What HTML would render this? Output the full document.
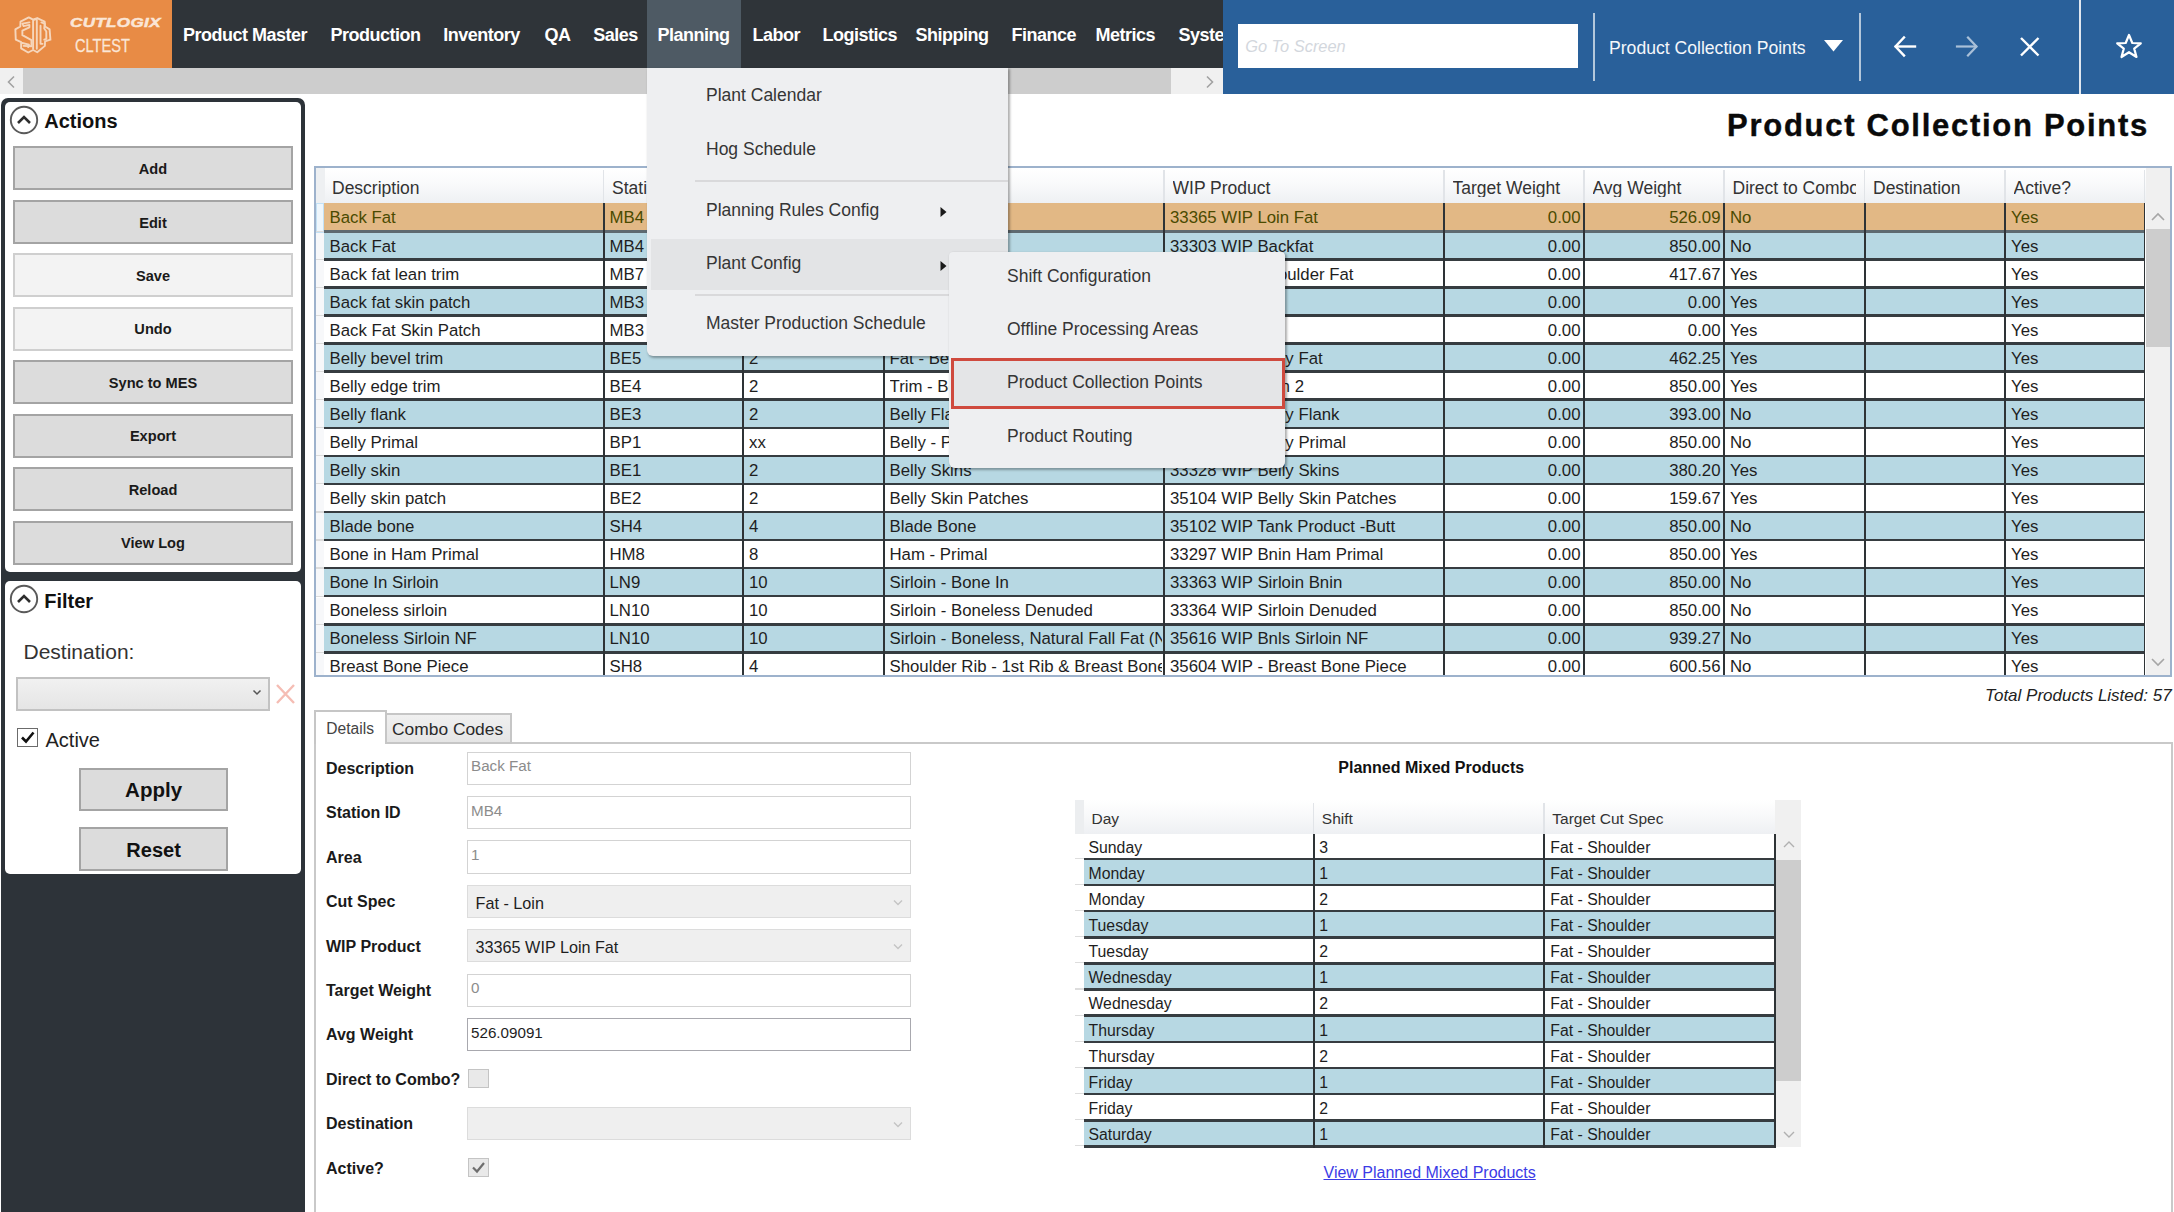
<!DOCTYPE html><html><head><meta charset="utf-8"><style>
html,body{margin:0;padding:0;width:2174px;height:1212px;overflow:hidden;background:#fff;font-family:"Liberation Sans",sans-serif;}
div{box-sizing:border-box;}
svg{position:absolute;overflow:visible;}
</style></head><body>
<div style="position:absolute;left:0.00px;top:0.00px;width:172.00px;height:68.00px;background:#e88b45"></div>
<svg style="left:10px;top:10px" width="50" height="50" viewBox="0 0 1212 1212">
<g fill="none" stroke="#f6d6bb" stroke-width="46" stroke-linejoin="round" stroke-linecap="round">
<path d="M455 180 L560 235 L660 195 L840 280 L850 400 L960 470 L980 720 L850 760 L845 870 L660 1025 L560 970 L440 1030 L270 930 L270 780 L140 720 L130 470 L250 400 L255 280 Z"/>
<path d="M560 940 L560 260 Q600 205 650 240 L650 940"/>
<path d="M470 300 L300 330 L330 390 L470 360 L470 420 L300 500 L300 610 L520 730 L520 880 L330 870"/>
<path d="M300 800 L460 840 L440 900"/>
<path d="M740 380 L740 820 L790 820"/>
<path d="M760 300 L840 330 L830 450 L880 520 L880 700 L830 720"/>
</g></svg>
<div style="position:absolute;left:70px;top:15.6px;font-size:13.4px;line-height:13.4px;font-weight:700;font-style:italic;color:#fbe6d6;white-space:nowrap;transform:scaleX(1.27);transform-origin:0 0;-webkit-text-stroke:0.5px #fbe6d6;letter-spacing:0.3px">CUTLOGIX</div>
<div style="position:absolute;left:75px;top:36.4px;font-size:19px;line-height:19px;color:#fbe6d6;white-space:nowrap;transform:scaleX(0.77);transform-origin:0 0;-webkit-text-stroke:0.3px #fbe6d6">CLTEST</div>
<div style="position:absolute;left:172.00px;top:0.00px;width:1050.50px;height:68.00px;background:#2f3439"></div>
<div style="position:absolute;left:646.50px;top:0.00px;width:94.50px;height:68.00px;background:#4e5a64"></div>
<div style="position:absolute;left:172px;top:0;width:1050.5px;height:67.5px;overflow:hidden">
<div style="position:absolute;left:11.0px;top:26.06px;font-size:18px;line-height:18px;font-weight:700;color:#fff;white-space:nowrap;letter-spacing:-0.5px">Product Master</div>
<div style="position:absolute;left:158.5px;top:26.06px;font-size:18px;line-height:18px;font-weight:700;color:#fff;white-space:nowrap;letter-spacing:-0.5px">Production</div>
<div style="position:absolute;left:271.3px;top:26.06px;font-size:18px;line-height:18px;font-weight:700;color:#fff;white-space:nowrap;letter-spacing:-0.5px">Inventory</div>
<div style="position:absolute;left:372.5px;top:26.06px;font-size:18px;line-height:18px;font-weight:700;color:#fff;white-space:nowrap;letter-spacing:-0.5px">QA</div>
<div style="position:absolute;left:421.3px;top:26.06px;font-size:18px;line-height:18px;font-weight:700;color:#fff;white-space:nowrap;letter-spacing:-0.5px">Sales</div>
<div style="position:absolute;left:485.5px;top:26.06px;font-size:18px;line-height:18px;font-weight:700;color:#fff;white-space:nowrap;letter-spacing:-0.5px">Planning</div>
<div style="position:absolute;left:580.5px;top:26.06px;font-size:18px;line-height:18px;font-weight:700;color:#fff;white-space:nowrap;letter-spacing:-0.5px">Labor</div>
<div style="position:absolute;left:650.5px;top:26.06px;font-size:18px;line-height:18px;font-weight:700;color:#fff;white-space:nowrap;letter-spacing:-0.5px">Logistics</div>
<div style="position:absolute;left:743.5px;top:26.06px;font-size:18px;line-height:18px;font-weight:700;color:#fff;white-space:nowrap;letter-spacing:-0.5px">Shipping</div>
<div style="position:absolute;left:839.5px;top:26.06px;font-size:18px;line-height:18px;font-weight:700;color:#fff;white-space:nowrap;letter-spacing:-0.5px">Finance</div>
<div style="position:absolute;left:923.5px;top:26.06px;font-size:18px;line-height:18px;font-weight:700;color:#fff;white-space:nowrap;letter-spacing:-0.5px">Metrics</div>
<div style="position:absolute;left:1006.5px;top:26.06px;font-size:18px;line-height:18px;font-weight:700;color:#fff;white-space:nowrap;letter-spacing:-0.5px">System</div>
</div>
<div style="position:absolute;left:1222.50px;top:0.00px;width:951.50px;height:93.50px;background:#29609a"></div>
<div style="position:absolute;left:1238.30px;top:24.40px;width:340.20px;height:43.40px;background:#fff"></div>
<div style="position:absolute;top:37.82px;font-size:16.4px;line-height:16.4px;font-weight:400;font-style:italic;color:#d3d7dd;white-space:nowrap;left:1245.20px;">Go To Screen</div>
<div style="position:absolute;left:1593.40px;top:12.50px;width:2.00px;height:68.00px;background:#b3c7db"></div>
<div style="position:absolute;left:1859.00px;top:12.50px;width:2.00px;height:68.00px;background:#b3c7db"></div>
<div style="position:absolute;left:2078.50px;top:0.00px;width:2.00px;height:93.50px;background:#dfe7f0"></div>
<div style="position:absolute;top:39.80px;font-size:17.6px;line-height:17.6px;font-weight:400;font-style:normal;color:#f4f7fa;white-space:nowrap;left:1609.00px;">Product Collection Points</div>
<svg style="left:1824px;top:40px" width="20" height="12"><polygon points="0,0 19,0 9.5,11.6" fill="#fff"/></svg>
<svg style="left:1893px;top:35px" width="24" height="23"><g fill="none" stroke="#fff" stroke-width="2.4" stroke-linecap="square"><path d="M3 11.5 H22"/><path d="M11 2.5 L2.5 11.5 L11 20.5"/></g></svg>
<svg style="left:1955px;top:35px" width="24" height="23"><g fill="none" stroke="#a9c0d8" stroke-width="2.2" stroke-linecap="square"><path d="M2 11.5 H21"/><path d="M13 2.5 L21.5 11.5 L13 20.5"/></g></svg>
<svg style="left:2019px;top:36px" width="22" height="22"><g fill="none" stroke="#fff" stroke-width="2.4"><path d="M2 2 L19.5 19.5 M19.5 2 L2 19.5"/></g></svg>
<svg style="left:2114px;top:32px" width="30" height="28"><path d="M15 3 L18.3 11 L26.8 11.3 L20.2 16.6 L22.5 25 L15 20.2 L7.5 25 L9.8 16.6 L3.2 11.3 L11.7 11 Z" fill="none" stroke="#fff" stroke-width="2.2" stroke-linejoin="round"/></svg>
<div style="position:absolute;left:0.00px;top:68.00px;width:1222.50px;height:25.50px;background:#f0f0f0"></div>
<div style="position:absolute;left:23.00px;top:68.00px;width:1148.00px;height:25.50px;background:#cdcdcd"></div>
<svg style="left:6px;top:75px" width="10" height="14"><path d="M8 1.5 L2.5 7 L8 12.5" fill="none" stroke="#a2a2a2" stroke-width="1.6"/></svg>
<svg style="left:1205px;top:75px" width="10" height="14"><path d="M2 1.5 L7.5 7 L2 12.5" fill="none" stroke="#a2a2a2" stroke-width="1.6"/></svg>
<div style="position:absolute;left:1.00px;top:97.50px;width:303.50px;height:1120.00px;background:#2d3339;border-radius:7px 7px 0 0"></div>
<div style="position:absolute;left:5.00px;top:102.00px;width:295.50px;height:470.00px;background:#fff;border-radius:5px"></div>
<div style="position:absolute;left:5.00px;top:580.50px;width:295.50px;height:293.50px;background:#fff;border-radius:5px"></div>
<svg style="left:8.7px;top:104.8px" width="30" height="30"><circle cx="15" cy="15" r="13.2" fill="none" stroke="#5a5a5a" stroke-width="1.9"/><path d="M9 18 L15 12 L21 18" fill="none" stroke="#2e2e2e" stroke-width="2.6"/></svg>
<div style="position:absolute;top:111.47px;font-size:20px;line-height:20px;font-weight:700;font-style:normal;color:#111;white-space:nowrap;left:44.20px;">Actions</div>
<div style="position:absolute;left:13.00px;top:146.10px;width:280.00px;height:44.20px;background:#dcdcdc;border:2px solid #a4a4a4"></div>
<div style="position:absolute;top:162.04px;font-size:14.6px;line-height:14.6px;font-weight:700;font-style:normal;color:#1a1a1a;white-space:nowrap;left:23.00px;width:260px;text-align:center;">Add</div>
<div style="position:absolute;left:13.00px;top:199.80px;width:280.00px;height:44.20px;background:#dcdcdc;border:2px solid #a4a4a4"></div>
<div style="position:absolute;top:215.74px;font-size:14.6px;line-height:14.6px;font-weight:700;font-style:normal;color:#1a1a1a;white-space:nowrap;left:23.00px;width:260px;text-align:center;">Edit</div>
<div style="position:absolute;left:13.00px;top:253.30px;width:280.00px;height:44.20px;background:#f3f3f3;border:2px solid #cfcfcf"></div>
<div style="position:absolute;top:269.24px;font-size:14.6px;line-height:14.6px;font-weight:700;font-style:normal;color:#1a1a1a;white-space:nowrap;left:23.00px;width:260px;text-align:center;">Save</div>
<div style="position:absolute;left:13.00px;top:306.50px;width:280.00px;height:44.20px;background:#f3f3f3;border:2px solid #cfcfcf"></div>
<div style="position:absolute;top:322.44px;font-size:14.6px;line-height:14.6px;font-weight:700;font-style:normal;color:#1a1a1a;white-space:nowrap;left:23.00px;width:260px;text-align:center;">Undo</div>
<div style="position:absolute;left:13.00px;top:360.00px;width:280.00px;height:44.20px;background:#dcdcdc;border:2px solid #a4a4a4"></div>
<div style="position:absolute;top:375.94px;font-size:14.6px;line-height:14.6px;font-weight:700;font-style:normal;color:#1a1a1a;white-space:nowrap;left:23.00px;width:260px;text-align:center;">Sync to MES</div>
<div style="position:absolute;left:13.00px;top:413.50px;width:280.00px;height:44.20px;background:#dcdcdc;border:2px solid #a4a4a4"></div>
<div style="position:absolute;top:429.44px;font-size:14.6px;line-height:14.6px;font-weight:700;font-style:normal;color:#1a1a1a;white-space:nowrap;left:23.00px;width:260px;text-align:center;">Export</div>
<div style="position:absolute;left:13.00px;top:467.00px;width:280.00px;height:44.20px;background:#dcdcdc;border:2px solid #a4a4a4"></div>
<div style="position:absolute;top:482.94px;font-size:14.6px;line-height:14.6px;font-weight:700;font-style:normal;color:#1a1a1a;white-space:nowrap;left:23.00px;width:260px;text-align:center;">Reload</div>
<div style="position:absolute;left:13.00px;top:520.50px;width:280.00px;height:44.20px;background:#dcdcdc;border:2px solid #a4a4a4"></div>
<div style="position:absolute;top:536.44px;font-size:14.6px;line-height:14.6px;font-weight:700;font-style:normal;color:#1a1a1a;white-space:nowrap;left:23.00px;width:260px;text-align:center;">View Log</div>
<svg style="left:8.7px;top:584.0px" width="30" height="30"><circle cx="15" cy="15" r="13.2" fill="none" stroke="#5a5a5a" stroke-width="1.9"/><path d="M9 18 L15 12 L21 18" fill="none" stroke="#2e2e2e" stroke-width="2.6"/></svg>
<div style="position:absolute;top:591.27px;font-size:20px;line-height:20px;font-weight:700;font-style:normal;color:#111;white-space:nowrap;left:44.20px;">Filter</div>
<div style="position:absolute;top:640.52px;font-size:21px;line-height:21px;font-weight:400;font-style:normal;color:#333;white-space:nowrap;left:23.50px;">Destination:</div>
<div style="position:absolute;left:15.60px;top:676.80px;width:254.80px;height:34.00px;background:linear-gradient(#f1f1f1,#e5e5e5);border:2px solid #c2c2c2"></div>
<svg style="left:252px;top:689px" width="10" height="8"><path d="M1.5 1.5 L5 5 L8.5 1.5" fill="none" stroke="#555" stroke-width="1.5"/></svg>
<svg style="left:275px;top:683px" width="22" height="22"><path d="M2 2 L19 20 M19 2 L2 20" fill="none" stroke="#f5bdb4" stroke-width="2.4"/></svg>
<div style="position:absolute;left:17.20px;top:727.60px;width:20.70px;height:19.20px;background:#fff;border:1.5px solid #6b6b6b"></div>
<svg style="left:19px;top:730px" width="18" height="15"><path d="M3 7.5 L7 11.5 L14.5 2.5" fill="none" stroke="#111" stroke-width="2.6"/></svg>
<div style="position:absolute;top:730.47px;font-size:20px;line-height:20px;font-weight:400;font-style:normal;color:#222;white-space:nowrap;left:45.50px;">Active</div>
<div style="position:absolute;left:79.20px;top:767.70px;width:148.80px;height:43.80px;background:#dcdcdc;border:2px solid #a4a4a4"></div>
<div style="position:absolute;top:780.35px;font-size:20.5px;line-height:20.5px;font-weight:700;font-style:normal;color:#111;white-space:nowrap;left:83.60px;width:140px;text-align:center;">Apply</div>
<div style="position:absolute;left:79.20px;top:827.10px;width:148.80px;height:43.80px;background:#dcdcdc;border:2px solid #a4a4a4"></div>
<div style="position:absolute;top:840.17px;font-size:20px;line-height:20px;font-weight:700;font-style:normal;color:#111;white-space:nowrap;left:83.60px;width:140px;text-align:center;">Reset</div>
<div style="position:absolute;top:110.46px;font-size:31px;line-height:31px;font-weight:700;font-style:normal;color:#0a0a0a;white-space:nowrap;letter-spacing:1.72px;-webkit-text-stroke:0.4px #0a0a0a;right:25.00px;">Product Collection Points</div>
<div style="position:absolute;left:313.50px;top:166.30px;width:1858.30px;height:510.70px;border:2px solid #9db2cc;background:#fff"></div>
<div style="position:absolute;left:315.50px;top:168.30px;width:1854.30px;height:34.70px;background:linear-gradient(#ffffff 0%,#f9fafb 45%,#eef0f3 100%)"></div>
<div style="position:absolute;left:315.50px;top:168.30px;width:9.00px;height:34.70px;background:#eef0f2"></div>
<div style="position:absolute;left:602.50px;top:170.30px;width:1.50px;height:32.70px;background:#e1e4e8"></div>
<div style="position:absolute;left:332.0px;top:178.69px;width:269.0px;overflow:hidden;font-size:17.5px;line-height:18px;color:#333;white-space:nowrap">Description</div>
<div style="position:absolute;left:742.00px;top:170.30px;width:1.50px;height:32.70px;background:#e1e4e8"></div>
<div style="position:absolute;left:612.0px;top:178.69px;width:128.5px;overflow:hidden;font-size:17.5px;line-height:18px;color:#333;white-space:nowrap">Station ID</div>
<div style="position:absolute;left:882.50px;top:170.30px;width:1.50px;height:32.70px;background:#e1e4e8"></div>
<div style="position:absolute;left:751.5px;top:178.69px;width:129.5px;overflow:hidden;font-size:17.5px;line-height:18px;color:#333;white-space:nowrap">Area</div>
<div style="position:absolute;left:1163.00px;top:170.30px;width:1.50px;height:32.70px;background:#e1e4e8"></div>
<div style="position:absolute;left:892.0px;top:178.69px;width:269.5px;overflow:hidden;font-size:17.5px;line-height:18px;color:#333;white-space:nowrap">Cut Spec</div>
<div style="position:absolute;left:1443.00px;top:170.30px;width:1.50px;height:32.70px;background:#e1e4e8"></div>
<div style="position:absolute;left:1172.5px;top:178.69px;width:269.0px;overflow:hidden;font-size:17.5px;line-height:18px;color:#333;white-space:nowrap">WIP Product</div>
<div style="position:absolute;left:1583.00px;top:170.30px;width:1.50px;height:32.70px;background:#e1e4e8"></div>
<div style="position:absolute;left:1452.5px;top:178.69px;width:129.0px;overflow:hidden;font-size:17.5px;line-height:18px;color:#333;white-space:nowrap">Target Weight</div>
<div style="position:absolute;left:1723.00px;top:170.30px;width:1.50px;height:32.70px;background:#e1e4e8"></div>
<div style="position:absolute;left:1592.5px;top:178.69px;width:129.0px;overflow:hidden;font-size:17.5px;line-height:18px;color:#333;white-space:nowrap">Avg Weight</div>
<div style="position:absolute;left:1863.50px;top:170.30px;width:1.50px;height:32.70px;background:#e1e4e8"></div>
<div style="position:absolute;left:1732.5px;top:178.69px;width:123.5px;overflow:hidden;font-size:17.5px;line-height:18px;color:#333;white-space:nowrap">Direct to Combo</div>
<div style="position:absolute;left:2004.00px;top:170.30px;width:1.50px;height:32.70px;background:#e1e4e8"></div>
<div style="position:absolute;left:1873.0px;top:178.69px;width:129.5px;overflow:hidden;font-size:17.5px;line-height:18px;color:#333;white-space:nowrap">Destination</div>
<div style="position:absolute;left:2143.50px;top:170.30px;width:1.50px;height:32.70px;background:#e1e4e8"></div>
<div style="position:absolute;left:2013.5px;top:178.69px;width:128.5px;overflow:hidden;font-size:17.5px;line-height:18px;color:#333;white-space:nowrap">Active?</div>
<div style="position:absolute;left:2145.50px;top:168.30px;width:24.30px;height:506.70px;background:#f0f0f0"></div>
<div style="position:absolute;left:2145.50px;top:228.50px;width:24.50px;height:118.00px;background:#cdcdcd"></div>
<svg style="left:2150px;top:212px" width="16" height="10"><path d="M2 8 L8 2 L14 8" fill="none" stroke="#a6a6a6" stroke-width="1.6"/></svg>
<svg style="left:2150px;top:657px" width="16" height="10"><path d="M2 2 L8 8 L14 2" fill="none" stroke="#a6a6a6" stroke-width="1.6"/></svg>
<div style="position:absolute;left:315.5px;top:203px;width:1829.0px;height:472.0px;overflow:hidden">
<div style="position:absolute;left:0.00px;top:0.00px;width:8.00px;height:29.85px;background:#eef6fc;border:1px solid #c3e1f5"></div>
<div style="position:absolute;left:0.00px;top:27.85px;width:8.00px;height:1.20px;background:#dcdcdc"></div>
<div style="position:absolute;left:8.00px;top:0.00px;width:1821.00px;height:29.85px;background:#e2b885"></div>
<div style="position:absolute;left:8.00px;top:27.15px;width:1821.00px;height:2.70px;background:#5e6a70"></div>
<div style="position:absolute;left:14.0px;top:7.48px;width:272.0px;overflow:hidden;font-size:16.8px;line-height:16.8px;color:#4a4a00;white-space:nowrap">Back Fat</div>
<div style="position:absolute;left:294.0px;top:7.48px;width:131.5px;overflow:hidden;font-size:16.8px;line-height:16.8px;color:#4a4a00;white-space:nowrap">MB4</div>
<div style="position:absolute;left:433.5px;top:7.48px;width:132.5px;overflow:hidden;font-size:16.8px;line-height:16.8px;color:#4a4a00;white-space:nowrap">1</div>
<div style="position:absolute;left:574.0px;top:7.48px;width:272.5px;overflow:hidden;font-size:16.8px;line-height:16.8px;color:#4a4a00;white-space:nowrap">Fat - Loin</div>
<div style="position:absolute;left:854.5px;top:7.48px;width:272.0px;overflow:hidden;font-size:16.8px;line-height:16.8px;color:#4a4a00;white-space:nowrap">33365 WIP Loin Fat</div>
<div style="position:absolute;left:1128.5px;top:7.48px;width:136.5px;text-align:right;font-size:16.8px;line-height:16.8px;color:#4a4a00;white-space:nowrap">0.00</div>
<div style="position:absolute;left:1268.5px;top:7.48px;width:136.5px;text-align:right;font-size:16.8px;line-height:16.8px;color:#4a4a00;white-space:nowrap">526.09</div>
<div style="position:absolute;left:1414.5px;top:7.48px;width:132.5px;overflow:hidden;font-size:16.8px;line-height:16.8px;color:#4a4a00;white-space:nowrap">No</div>
<div style="position:absolute;left:1555.0px;top:7.48px;width:132.5px;overflow:hidden;font-size:16.8px;line-height:16.8px;color:#4a4a00;white-space:nowrap"></div>
<div style="position:absolute;left:1695.5px;top:7.48px;width:131.5px;overflow:hidden;font-size:16.8px;line-height:16.8px;color:#4a4a00;white-space:nowrap">Yes</div>
<div style="position:absolute;left:0.00px;top:29.85px;width:8.00px;height:28.05px;background:#f7f8fa"></div>
<div style="position:absolute;left:0.00px;top:55.90px;width:8.00px;height:1.20px;background:#dcdcdc"></div>
<div style="position:absolute;left:8.00px;top:29.85px;width:1821.00px;height:28.05px;background:#b7d8e3"></div>
<div style="position:absolute;left:8.00px;top:55.20px;width:1821.00px;height:2.70px;background:#363c40"></div>
<div style="position:absolute;left:14.0px;top:35.53px;width:272.0px;overflow:hidden;font-size:16.8px;line-height:16.8px;color:#1e1e1e;white-space:nowrap">Back Fat</div>
<div style="position:absolute;left:294.0px;top:35.53px;width:131.5px;overflow:hidden;font-size:16.8px;line-height:16.8px;color:#1e1e1e;white-space:nowrap">MB4</div>
<div style="position:absolute;left:433.5px;top:35.53px;width:132.5px;overflow:hidden;font-size:16.8px;line-height:16.8px;color:#1e1e1e;white-space:nowrap">1</div>
<div style="position:absolute;left:574.0px;top:35.53px;width:272.5px;overflow:hidden;font-size:16.8px;line-height:16.8px;color:#1e1e1e;white-space:nowrap">Fat - Back</div>
<div style="position:absolute;left:854.5px;top:35.53px;width:272.0px;overflow:hidden;font-size:16.8px;line-height:16.8px;color:#1e1e1e;white-space:nowrap">33303 WIP Backfat</div>
<div style="position:absolute;left:1128.5px;top:35.53px;width:136.5px;text-align:right;font-size:16.8px;line-height:16.8px;color:#1e1e1e;white-space:nowrap">0.00</div>
<div style="position:absolute;left:1268.5px;top:35.53px;width:136.5px;text-align:right;font-size:16.8px;line-height:16.8px;color:#1e1e1e;white-space:nowrap">850.00</div>
<div style="position:absolute;left:1414.5px;top:35.53px;width:132.5px;overflow:hidden;font-size:16.8px;line-height:16.8px;color:#1e1e1e;white-space:nowrap">No</div>
<div style="position:absolute;left:1555.0px;top:35.53px;width:132.5px;overflow:hidden;font-size:16.8px;line-height:16.8px;color:#1e1e1e;white-space:nowrap"></div>
<div style="position:absolute;left:1695.5px;top:35.53px;width:131.5px;overflow:hidden;font-size:16.8px;line-height:16.8px;color:#1e1e1e;white-space:nowrap">Yes</div>
<div style="position:absolute;left:0.00px;top:57.90px;width:8.00px;height:28.05px;background:#f7f8fa"></div>
<div style="position:absolute;left:0.00px;top:83.95px;width:8.00px;height:1.20px;background:#dcdcdc"></div>
<div style="position:absolute;left:8.00px;top:57.90px;width:1821.00px;height:28.05px;background:#ffffff"></div>
<div style="position:absolute;left:8.00px;top:83.25px;width:1821.00px;height:2.70px;background:#363c40"></div>
<div style="position:absolute;left:14.0px;top:63.58px;width:272.0px;overflow:hidden;font-size:16.8px;line-height:16.8px;color:#1e1e1e;white-space:nowrap">Back fat lean trim</div>
<div style="position:absolute;left:294.0px;top:63.58px;width:131.5px;overflow:hidden;font-size:16.8px;line-height:16.8px;color:#1e1e1e;white-space:nowrap">MB7</div>
<div style="position:absolute;left:433.5px;top:63.58px;width:132.5px;overflow:hidden;font-size:16.8px;line-height:16.8px;color:#1e1e1e;white-space:nowrap">1</div>
<div style="position:absolute;left:574.0px;top:63.58px;width:272.5px;overflow:hidden;font-size:16.8px;line-height:16.8px;color:#1e1e1e;white-space:nowrap">Fat - Shoulder</div>
<div style="position:absolute;left:854.5px;top:63.58px;width:272.0px;overflow:hidden;font-size:16.8px;line-height:16.8px;color:#1e1e1e;white-space:nowrap">33300 WIP Shoulder Fat</div>
<div style="position:absolute;left:1128.5px;top:63.58px;width:136.5px;text-align:right;font-size:16.8px;line-height:16.8px;color:#1e1e1e;white-space:nowrap">0.00</div>
<div style="position:absolute;left:1268.5px;top:63.58px;width:136.5px;text-align:right;font-size:16.8px;line-height:16.8px;color:#1e1e1e;white-space:nowrap">417.67</div>
<div style="position:absolute;left:1414.5px;top:63.58px;width:132.5px;overflow:hidden;font-size:16.8px;line-height:16.8px;color:#1e1e1e;white-space:nowrap">Yes</div>
<div style="position:absolute;left:1555.0px;top:63.58px;width:132.5px;overflow:hidden;font-size:16.8px;line-height:16.8px;color:#1e1e1e;white-space:nowrap"></div>
<div style="position:absolute;left:1695.5px;top:63.58px;width:131.5px;overflow:hidden;font-size:16.8px;line-height:16.8px;color:#1e1e1e;white-space:nowrap">Yes</div>
<div style="position:absolute;left:0.00px;top:85.95px;width:8.00px;height:28.05px;background:#f7f8fa"></div>
<div style="position:absolute;left:0.00px;top:112.00px;width:8.00px;height:1.20px;background:#dcdcdc"></div>
<div style="position:absolute;left:8.00px;top:85.95px;width:1821.00px;height:28.05px;background:#b7d8e3"></div>
<div style="position:absolute;left:8.00px;top:111.30px;width:1821.00px;height:2.70px;background:#363c40"></div>
<div style="position:absolute;left:14.0px;top:91.63px;width:272.0px;overflow:hidden;font-size:16.8px;line-height:16.8px;color:#1e1e1e;white-space:nowrap">Back fat skin patch</div>
<div style="position:absolute;left:294.0px;top:91.63px;width:131.5px;overflow:hidden;font-size:16.8px;line-height:16.8px;color:#1e1e1e;white-space:nowrap">MB3</div>
<div style="position:absolute;left:433.5px;top:91.63px;width:132.5px;overflow:hidden;font-size:16.8px;line-height:16.8px;color:#1e1e1e;white-space:nowrap">1</div>
<div style="position:absolute;left:574.0px;top:91.63px;width:272.5px;overflow:hidden;font-size:16.8px;line-height:16.8px;color:#1e1e1e;white-space:nowrap">Skin Patches</div>
<div style="position:absolute;left:854.5px;top:91.63px;width:272.0px;overflow:hidden;font-size:16.8px;line-height:16.8px;color:#1e1e1e;white-space:nowrap"></div>
<div style="position:absolute;left:1128.5px;top:91.63px;width:136.5px;text-align:right;font-size:16.8px;line-height:16.8px;color:#1e1e1e;white-space:nowrap">0.00</div>
<div style="position:absolute;left:1268.5px;top:91.63px;width:136.5px;text-align:right;font-size:16.8px;line-height:16.8px;color:#1e1e1e;white-space:nowrap">0.00</div>
<div style="position:absolute;left:1414.5px;top:91.63px;width:132.5px;overflow:hidden;font-size:16.8px;line-height:16.8px;color:#1e1e1e;white-space:nowrap">Yes</div>
<div style="position:absolute;left:1555.0px;top:91.63px;width:132.5px;overflow:hidden;font-size:16.8px;line-height:16.8px;color:#1e1e1e;white-space:nowrap"></div>
<div style="position:absolute;left:1695.5px;top:91.63px;width:131.5px;overflow:hidden;font-size:16.8px;line-height:16.8px;color:#1e1e1e;white-space:nowrap">Yes</div>
<div style="position:absolute;left:0.00px;top:114.00px;width:8.00px;height:28.05px;background:#f7f8fa"></div>
<div style="position:absolute;left:0.00px;top:140.05px;width:8.00px;height:1.20px;background:#dcdcdc"></div>
<div style="position:absolute;left:8.00px;top:114.00px;width:1821.00px;height:28.05px;background:#ffffff"></div>
<div style="position:absolute;left:8.00px;top:139.35px;width:1821.00px;height:2.70px;background:#363c40"></div>
<div style="position:absolute;left:14.0px;top:119.68px;width:272.0px;overflow:hidden;font-size:16.8px;line-height:16.8px;color:#1e1e1e;white-space:nowrap">Back Fat Skin Patch</div>
<div style="position:absolute;left:294.0px;top:119.68px;width:131.5px;overflow:hidden;font-size:16.8px;line-height:16.8px;color:#1e1e1e;white-space:nowrap">MB3</div>
<div style="position:absolute;left:433.5px;top:119.68px;width:132.5px;overflow:hidden;font-size:16.8px;line-height:16.8px;color:#1e1e1e;white-space:nowrap">1</div>
<div style="position:absolute;left:574.0px;top:119.68px;width:272.5px;overflow:hidden;font-size:16.8px;line-height:16.8px;color:#1e1e1e;white-space:nowrap">Skin Patches</div>
<div style="position:absolute;left:854.5px;top:119.68px;width:272.0px;overflow:hidden;font-size:16.8px;line-height:16.8px;color:#1e1e1e;white-space:nowrap"></div>
<div style="position:absolute;left:1128.5px;top:119.68px;width:136.5px;text-align:right;font-size:16.8px;line-height:16.8px;color:#1e1e1e;white-space:nowrap">0.00</div>
<div style="position:absolute;left:1268.5px;top:119.68px;width:136.5px;text-align:right;font-size:16.8px;line-height:16.8px;color:#1e1e1e;white-space:nowrap">0.00</div>
<div style="position:absolute;left:1414.5px;top:119.68px;width:132.5px;overflow:hidden;font-size:16.8px;line-height:16.8px;color:#1e1e1e;white-space:nowrap">Yes</div>
<div style="position:absolute;left:1555.0px;top:119.68px;width:132.5px;overflow:hidden;font-size:16.8px;line-height:16.8px;color:#1e1e1e;white-space:nowrap"></div>
<div style="position:absolute;left:1695.5px;top:119.68px;width:131.5px;overflow:hidden;font-size:16.8px;line-height:16.8px;color:#1e1e1e;white-space:nowrap">Yes</div>
<div style="position:absolute;left:0.00px;top:142.05px;width:8.00px;height:28.05px;background:#f7f8fa"></div>
<div style="position:absolute;left:0.00px;top:168.10px;width:8.00px;height:1.20px;background:#dcdcdc"></div>
<div style="position:absolute;left:8.00px;top:142.05px;width:1821.00px;height:28.05px;background:#b7d8e3"></div>
<div style="position:absolute;left:8.00px;top:167.40px;width:1821.00px;height:2.70px;background:#363c40"></div>
<div style="position:absolute;left:14.0px;top:147.73px;width:272.0px;overflow:hidden;font-size:16.8px;line-height:16.8px;color:#1e1e1e;white-space:nowrap">Belly bevel trim</div>
<div style="position:absolute;left:294.0px;top:147.73px;width:131.5px;overflow:hidden;font-size:16.8px;line-height:16.8px;color:#1e1e1e;white-space:nowrap">BE5</div>
<div style="position:absolute;left:433.5px;top:147.73px;width:132.5px;overflow:hidden;font-size:16.8px;line-height:16.8px;color:#1e1e1e;white-space:nowrap">2</div>
<div style="position:absolute;left:574.0px;top:147.73px;width:272.5px;overflow:hidden;font-size:16.8px;line-height:16.8px;color:#1e1e1e;white-space:nowrap">Fat - Belly</div>
<div style="position:absolute;left:854.5px;top:147.73px;width:272.0px;overflow:hidden;font-size:16.8px;line-height:16.8px;color:#1e1e1e;white-space:nowrap">33301 WIP Belly Fat</div>
<div style="position:absolute;left:1128.5px;top:147.73px;width:136.5px;text-align:right;font-size:16.8px;line-height:16.8px;color:#1e1e1e;white-space:nowrap">0.00</div>
<div style="position:absolute;left:1268.5px;top:147.73px;width:136.5px;text-align:right;font-size:16.8px;line-height:16.8px;color:#1e1e1e;white-space:nowrap">462.25</div>
<div style="position:absolute;left:1414.5px;top:147.73px;width:132.5px;overflow:hidden;font-size:16.8px;line-height:16.8px;color:#1e1e1e;white-space:nowrap">Yes</div>
<div style="position:absolute;left:1555.0px;top:147.73px;width:132.5px;overflow:hidden;font-size:16.8px;line-height:16.8px;color:#1e1e1e;white-space:nowrap"></div>
<div style="position:absolute;left:1695.5px;top:147.73px;width:131.5px;overflow:hidden;font-size:16.8px;line-height:16.8px;color:#1e1e1e;white-space:nowrap">Yes</div>
<div style="position:absolute;left:0.00px;top:170.10px;width:8.00px;height:28.05px;background:#f7f8fa"></div>
<div style="position:absolute;left:0.00px;top:196.15px;width:8.00px;height:1.20px;background:#dcdcdc"></div>
<div style="position:absolute;left:8.00px;top:170.10px;width:1821.00px;height:28.05px;background:#ffffff"></div>
<div style="position:absolute;left:8.00px;top:195.45px;width:1821.00px;height:2.70px;background:#363c40"></div>
<div style="position:absolute;left:14.0px;top:175.78px;width:272.0px;overflow:hidden;font-size:16.8px;line-height:16.8px;color:#1e1e1e;white-space:nowrap">Belly edge trim</div>
<div style="position:absolute;left:294.0px;top:175.78px;width:131.5px;overflow:hidden;font-size:16.8px;line-height:16.8px;color:#1e1e1e;white-space:nowrap">BE4</div>
<div style="position:absolute;left:433.5px;top:175.78px;width:132.5px;overflow:hidden;font-size:16.8px;line-height:16.8px;color:#1e1e1e;white-space:nowrap">2</div>
<div style="position:absolute;left:574.0px;top:175.78px;width:272.5px;overflow:hidden;font-size:16.8px;line-height:16.8px;color:#1e1e1e;white-space:nowrap">Trim - Belly</div>
<div style="position:absolute;left:854.5px;top:175.78px;width:272.0px;overflow:hidden;font-size:16.8px;line-height:16.8px;color:#1e1e1e;white-space:nowrap">33302 WIP Trim 2</div>
<div style="position:absolute;left:1128.5px;top:175.78px;width:136.5px;text-align:right;font-size:16.8px;line-height:16.8px;color:#1e1e1e;white-space:nowrap">0.00</div>
<div style="position:absolute;left:1268.5px;top:175.78px;width:136.5px;text-align:right;font-size:16.8px;line-height:16.8px;color:#1e1e1e;white-space:nowrap">850.00</div>
<div style="position:absolute;left:1414.5px;top:175.78px;width:132.5px;overflow:hidden;font-size:16.8px;line-height:16.8px;color:#1e1e1e;white-space:nowrap">Yes</div>
<div style="position:absolute;left:1555.0px;top:175.78px;width:132.5px;overflow:hidden;font-size:16.8px;line-height:16.8px;color:#1e1e1e;white-space:nowrap"></div>
<div style="position:absolute;left:1695.5px;top:175.78px;width:131.5px;overflow:hidden;font-size:16.8px;line-height:16.8px;color:#1e1e1e;white-space:nowrap">Yes</div>
<div style="position:absolute;left:0.00px;top:198.15px;width:8.00px;height:28.05px;background:#f7f8fa"></div>
<div style="position:absolute;left:0.00px;top:224.20px;width:8.00px;height:1.20px;background:#dcdcdc"></div>
<div style="position:absolute;left:8.00px;top:198.15px;width:1821.00px;height:28.05px;background:#b7d8e3"></div>
<div style="position:absolute;left:8.00px;top:223.50px;width:1821.00px;height:2.70px;background:#363c40"></div>
<div style="position:absolute;left:14.0px;top:203.83px;width:272.0px;overflow:hidden;font-size:16.8px;line-height:16.8px;color:#1e1e1e;white-space:nowrap">Belly flank</div>
<div style="position:absolute;left:294.0px;top:203.83px;width:131.5px;overflow:hidden;font-size:16.8px;line-height:16.8px;color:#1e1e1e;white-space:nowrap">BE3</div>
<div style="position:absolute;left:433.5px;top:203.83px;width:132.5px;overflow:hidden;font-size:16.8px;line-height:16.8px;color:#1e1e1e;white-space:nowrap">2</div>
<div style="position:absolute;left:574.0px;top:203.83px;width:272.5px;overflow:hidden;font-size:16.8px;line-height:16.8px;color:#1e1e1e;white-space:nowrap">Belly Flank</div>
<div style="position:absolute;left:854.5px;top:203.83px;width:272.0px;overflow:hidden;font-size:16.8px;line-height:16.8px;color:#1e1e1e;white-space:nowrap">33325 WIP Belly Flank</div>
<div style="position:absolute;left:1128.5px;top:203.83px;width:136.5px;text-align:right;font-size:16.8px;line-height:16.8px;color:#1e1e1e;white-space:nowrap">0.00</div>
<div style="position:absolute;left:1268.5px;top:203.83px;width:136.5px;text-align:right;font-size:16.8px;line-height:16.8px;color:#1e1e1e;white-space:nowrap">393.00</div>
<div style="position:absolute;left:1414.5px;top:203.83px;width:132.5px;overflow:hidden;font-size:16.8px;line-height:16.8px;color:#1e1e1e;white-space:nowrap">No</div>
<div style="position:absolute;left:1555.0px;top:203.83px;width:132.5px;overflow:hidden;font-size:16.8px;line-height:16.8px;color:#1e1e1e;white-space:nowrap"></div>
<div style="position:absolute;left:1695.5px;top:203.83px;width:131.5px;overflow:hidden;font-size:16.8px;line-height:16.8px;color:#1e1e1e;white-space:nowrap">Yes</div>
<div style="position:absolute;left:0.00px;top:226.20px;width:8.00px;height:28.05px;background:#f7f8fa"></div>
<div style="position:absolute;left:0.00px;top:252.25px;width:8.00px;height:1.20px;background:#dcdcdc"></div>
<div style="position:absolute;left:8.00px;top:226.20px;width:1821.00px;height:28.05px;background:#ffffff"></div>
<div style="position:absolute;left:8.00px;top:251.55px;width:1821.00px;height:2.70px;background:#363c40"></div>
<div style="position:absolute;left:14.0px;top:231.88px;width:272.0px;overflow:hidden;font-size:16.8px;line-height:16.8px;color:#1e1e1e;white-space:nowrap">Belly Primal</div>
<div style="position:absolute;left:294.0px;top:231.88px;width:131.5px;overflow:hidden;font-size:16.8px;line-height:16.8px;color:#1e1e1e;white-space:nowrap">BP1</div>
<div style="position:absolute;left:433.5px;top:231.88px;width:132.5px;overflow:hidden;font-size:16.8px;line-height:16.8px;color:#1e1e1e;white-space:nowrap">xx</div>
<div style="position:absolute;left:574.0px;top:231.88px;width:272.5px;overflow:hidden;font-size:16.8px;line-height:16.8px;color:#1e1e1e;white-space:nowrap">Belly - Primal</div>
<div style="position:absolute;left:854.5px;top:231.88px;width:272.0px;overflow:hidden;font-size:16.8px;line-height:16.8px;color:#1e1e1e;white-space:nowrap">33326 WIP Belly Primal</div>
<div style="position:absolute;left:1128.5px;top:231.88px;width:136.5px;text-align:right;font-size:16.8px;line-height:16.8px;color:#1e1e1e;white-space:nowrap">0.00</div>
<div style="position:absolute;left:1268.5px;top:231.88px;width:136.5px;text-align:right;font-size:16.8px;line-height:16.8px;color:#1e1e1e;white-space:nowrap">850.00</div>
<div style="position:absolute;left:1414.5px;top:231.88px;width:132.5px;overflow:hidden;font-size:16.8px;line-height:16.8px;color:#1e1e1e;white-space:nowrap">No</div>
<div style="position:absolute;left:1555.0px;top:231.88px;width:132.5px;overflow:hidden;font-size:16.8px;line-height:16.8px;color:#1e1e1e;white-space:nowrap"></div>
<div style="position:absolute;left:1695.5px;top:231.88px;width:131.5px;overflow:hidden;font-size:16.8px;line-height:16.8px;color:#1e1e1e;white-space:nowrap">Yes</div>
<div style="position:absolute;left:0.00px;top:254.25px;width:8.00px;height:28.05px;background:#f7f8fa"></div>
<div style="position:absolute;left:0.00px;top:280.30px;width:8.00px;height:1.20px;background:#dcdcdc"></div>
<div style="position:absolute;left:8.00px;top:254.25px;width:1821.00px;height:28.05px;background:#b7d8e3"></div>
<div style="position:absolute;left:8.00px;top:279.60px;width:1821.00px;height:2.70px;background:#363c40"></div>
<div style="position:absolute;left:14.0px;top:259.93px;width:272.0px;overflow:hidden;font-size:16.8px;line-height:16.8px;color:#1e1e1e;white-space:nowrap">Belly skin</div>
<div style="position:absolute;left:294.0px;top:259.93px;width:131.5px;overflow:hidden;font-size:16.8px;line-height:16.8px;color:#1e1e1e;white-space:nowrap">BE1</div>
<div style="position:absolute;left:433.5px;top:259.93px;width:132.5px;overflow:hidden;font-size:16.8px;line-height:16.8px;color:#1e1e1e;white-space:nowrap">2</div>
<div style="position:absolute;left:574.0px;top:259.93px;width:272.5px;overflow:hidden;font-size:16.8px;line-height:16.8px;color:#1e1e1e;white-space:nowrap">Belly Skins</div>
<div style="position:absolute;left:854.5px;top:259.93px;width:272.0px;overflow:hidden;font-size:16.8px;line-height:16.8px;color:#1e1e1e;white-space:nowrap">33328 WIP Belly Skins</div>
<div style="position:absolute;left:1128.5px;top:259.93px;width:136.5px;text-align:right;font-size:16.8px;line-height:16.8px;color:#1e1e1e;white-space:nowrap">0.00</div>
<div style="position:absolute;left:1268.5px;top:259.93px;width:136.5px;text-align:right;font-size:16.8px;line-height:16.8px;color:#1e1e1e;white-space:nowrap">380.20</div>
<div style="position:absolute;left:1414.5px;top:259.93px;width:132.5px;overflow:hidden;font-size:16.8px;line-height:16.8px;color:#1e1e1e;white-space:nowrap">Yes</div>
<div style="position:absolute;left:1555.0px;top:259.93px;width:132.5px;overflow:hidden;font-size:16.8px;line-height:16.8px;color:#1e1e1e;white-space:nowrap"></div>
<div style="position:absolute;left:1695.5px;top:259.93px;width:131.5px;overflow:hidden;font-size:16.8px;line-height:16.8px;color:#1e1e1e;white-space:nowrap">Yes</div>
<div style="position:absolute;left:0.00px;top:282.30px;width:8.00px;height:28.05px;background:#f7f8fa"></div>
<div style="position:absolute;left:0.00px;top:308.35px;width:8.00px;height:1.20px;background:#dcdcdc"></div>
<div style="position:absolute;left:8.00px;top:282.30px;width:1821.00px;height:28.05px;background:#ffffff"></div>
<div style="position:absolute;left:8.00px;top:307.65px;width:1821.00px;height:2.70px;background:#363c40"></div>
<div style="position:absolute;left:14.0px;top:287.98px;width:272.0px;overflow:hidden;font-size:16.8px;line-height:16.8px;color:#1e1e1e;white-space:nowrap">Belly skin patch</div>
<div style="position:absolute;left:294.0px;top:287.98px;width:131.5px;overflow:hidden;font-size:16.8px;line-height:16.8px;color:#1e1e1e;white-space:nowrap">BE2</div>
<div style="position:absolute;left:433.5px;top:287.98px;width:132.5px;overflow:hidden;font-size:16.8px;line-height:16.8px;color:#1e1e1e;white-space:nowrap">2</div>
<div style="position:absolute;left:574.0px;top:287.98px;width:272.5px;overflow:hidden;font-size:16.8px;line-height:16.8px;color:#1e1e1e;white-space:nowrap">Belly Skin Patches</div>
<div style="position:absolute;left:854.5px;top:287.98px;width:272.0px;overflow:hidden;font-size:16.8px;line-height:16.8px;color:#1e1e1e;white-space:nowrap">35104 WIP Belly Skin Patches</div>
<div style="position:absolute;left:1128.5px;top:287.98px;width:136.5px;text-align:right;font-size:16.8px;line-height:16.8px;color:#1e1e1e;white-space:nowrap">0.00</div>
<div style="position:absolute;left:1268.5px;top:287.98px;width:136.5px;text-align:right;font-size:16.8px;line-height:16.8px;color:#1e1e1e;white-space:nowrap">159.67</div>
<div style="position:absolute;left:1414.5px;top:287.98px;width:132.5px;overflow:hidden;font-size:16.8px;line-height:16.8px;color:#1e1e1e;white-space:nowrap">Yes</div>
<div style="position:absolute;left:1555.0px;top:287.98px;width:132.5px;overflow:hidden;font-size:16.8px;line-height:16.8px;color:#1e1e1e;white-space:nowrap"></div>
<div style="position:absolute;left:1695.5px;top:287.98px;width:131.5px;overflow:hidden;font-size:16.8px;line-height:16.8px;color:#1e1e1e;white-space:nowrap">Yes</div>
<div style="position:absolute;left:0.00px;top:310.35px;width:8.00px;height:28.05px;background:#f7f8fa"></div>
<div style="position:absolute;left:0.00px;top:336.40px;width:8.00px;height:1.20px;background:#dcdcdc"></div>
<div style="position:absolute;left:8.00px;top:310.35px;width:1821.00px;height:28.05px;background:#b7d8e3"></div>
<div style="position:absolute;left:8.00px;top:335.70px;width:1821.00px;height:2.70px;background:#363c40"></div>
<div style="position:absolute;left:14.0px;top:316.03px;width:272.0px;overflow:hidden;font-size:16.8px;line-height:16.8px;color:#1e1e1e;white-space:nowrap">Blade bone</div>
<div style="position:absolute;left:294.0px;top:316.03px;width:131.5px;overflow:hidden;font-size:16.8px;line-height:16.8px;color:#1e1e1e;white-space:nowrap">SH4</div>
<div style="position:absolute;left:433.5px;top:316.03px;width:132.5px;overflow:hidden;font-size:16.8px;line-height:16.8px;color:#1e1e1e;white-space:nowrap">4</div>
<div style="position:absolute;left:574.0px;top:316.03px;width:272.5px;overflow:hidden;font-size:16.8px;line-height:16.8px;color:#1e1e1e;white-space:nowrap">Blade Bone</div>
<div style="position:absolute;left:854.5px;top:316.03px;width:272.0px;overflow:hidden;font-size:16.8px;line-height:16.8px;color:#1e1e1e;white-space:nowrap">35102 WIP Tank Product -Butt</div>
<div style="position:absolute;left:1128.5px;top:316.03px;width:136.5px;text-align:right;font-size:16.8px;line-height:16.8px;color:#1e1e1e;white-space:nowrap">0.00</div>
<div style="position:absolute;left:1268.5px;top:316.03px;width:136.5px;text-align:right;font-size:16.8px;line-height:16.8px;color:#1e1e1e;white-space:nowrap">850.00</div>
<div style="position:absolute;left:1414.5px;top:316.03px;width:132.5px;overflow:hidden;font-size:16.8px;line-height:16.8px;color:#1e1e1e;white-space:nowrap">No</div>
<div style="position:absolute;left:1555.0px;top:316.03px;width:132.5px;overflow:hidden;font-size:16.8px;line-height:16.8px;color:#1e1e1e;white-space:nowrap"></div>
<div style="position:absolute;left:1695.5px;top:316.03px;width:131.5px;overflow:hidden;font-size:16.8px;line-height:16.8px;color:#1e1e1e;white-space:nowrap">Yes</div>
<div style="position:absolute;left:0.00px;top:338.40px;width:8.00px;height:28.05px;background:#f7f8fa"></div>
<div style="position:absolute;left:0.00px;top:364.45px;width:8.00px;height:1.20px;background:#dcdcdc"></div>
<div style="position:absolute;left:8.00px;top:338.40px;width:1821.00px;height:28.05px;background:#ffffff"></div>
<div style="position:absolute;left:8.00px;top:363.75px;width:1821.00px;height:2.70px;background:#363c40"></div>
<div style="position:absolute;left:14.0px;top:344.08px;width:272.0px;overflow:hidden;font-size:16.8px;line-height:16.8px;color:#1e1e1e;white-space:nowrap">Bone in Ham Primal</div>
<div style="position:absolute;left:294.0px;top:344.08px;width:131.5px;overflow:hidden;font-size:16.8px;line-height:16.8px;color:#1e1e1e;white-space:nowrap">HM8</div>
<div style="position:absolute;left:433.5px;top:344.08px;width:132.5px;overflow:hidden;font-size:16.8px;line-height:16.8px;color:#1e1e1e;white-space:nowrap">8</div>
<div style="position:absolute;left:574.0px;top:344.08px;width:272.5px;overflow:hidden;font-size:16.8px;line-height:16.8px;color:#1e1e1e;white-space:nowrap">Ham - Primal</div>
<div style="position:absolute;left:854.5px;top:344.08px;width:272.0px;overflow:hidden;font-size:16.8px;line-height:16.8px;color:#1e1e1e;white-space:nowrap">33297 WIP Bnin Ham Primal</div>
<div style="position:absolute;left:1128.5px;top:344.08px;width:136.5px;text-align:right;font-size:16.8px;line-height:16.8px;color:#1e1e1e;white-space:nowrap">0.00</div>
<div style="position:absolute;left:1268.5px;top:344.08px;width:136.5px;text-align:right;font-size:16.8px;line-height:16.8px;color:#1e1e1e;white-space:nowrap">850.00</div>
<div style="position:absolute;left:1414.5px;top:344.08px;width:132.5px;overflow:hidden;font-size:16.8px;line-height:16.8px;color:#1e1e1e;white-space:nowrap">Yes</div>
<div style="position:absolute;left:1555.0px;top:344.08px;width:132.5px;overflow:hidden;font-size:16.8px;line-height:16.8px;color:#1e1e1e;white-space:nowrap"></div>
<div style="position:absolute;left:1695.5px;top:344.08px;width:131.5px;overflow:hidden;font-size:16.8px;line-height:16.8px;color:#1e1e1e;white-space:nowrap">Yes</div>
<div style="position:absolute;left:0.00px;top:366.45px;width:8.00px;height:28.05px;background:#f7f8fa"></div>
<div style="position:absolute;left:0.00px;top:392.50px;width:8.00px;height:1.20px;background:#dcdcdc"></div>
<div style="position:absolute;left:8.00px;top:366.45px;width:1821.00px;height:28.05px;background:#b7d8e3"></div>
<div style="position:absolute;left:8.00px;top:391.80px;width:1821.00px;height:2.70px;background:#363c40"></div>
<div style="position:absolute;left:14.0px;top:372.13px;width:272.0px;overflow:hidden;font-size:16.8px;line-height:16.8px;color:#1e1e1e;white-space:nowrap">Bone In Sirloin</div>
<div style="position:absolute;left:294.0px;top:372.13px;width:131.5px;overflow:hidden;font-size:16.8px;line-height:16.8px;color:#1e1e1e;white-space:nowrap">LN9</div>
<div style="position:absolute;left:433.5px;top:372.13px;width:132.5px;overflow:hidden;font-size:16.8px;line-height:16.8px;color:#1e1e1e;white-space:nowrap">10</div>
<div style="position:absolute;left:574.0px;top:372.13px;width:272.5px;overflow:hidden;font-size:16.8px;line-height:16.8px;color:#1e1e1e;white-space:nowrap">Sirloin - Bone In</div>
<div style="position:absolute;left:854.5px;top:372.13px;width:272.0px;overflow:hidden;font-size:16.8px;line-height:16.8px;color:#1e1e1e;white-space:nowrap">33363 WIP Sirloin Bnin</div>
<div style="position:absolute;left:1128.5px;top:372.13px;width:136.5px;text-align:right;font-size:16.8px;line-height:16.8px;color:#1e1e1e;white-space:nowrap">0.00</div>
<div style="position:absolute;left:1268.5px;top:372.13px;width:136.5px;text-align:right;font-size:16.8px;line-height:16.8px;color:#1e1e1e;white-space:nowrap">850.00</div>
<div style="position:absolute;left:1414.5px;top:372.13px;width:132.5px;overflow:hidden;font-size:16.8px;line-height:16.8px;color:#1e1e1e;white-space:nowrap">No</div>
<div style="position:absolute;left:1555.0px;top:372.13px;width:132.5px;overflow:hidden;font-size:16.8px;line-height:16.8px;color:#1e1e1e;white-space:nowrap"></div>
<div style="position:absolute;left:1695.5px;top:372.13px;width:131.5px;overflow:hidden;font-size:16.8px;line-height:16.8px;color:#1e1e1e;white-space:nowrap">Yes</div>
<div style="position:absolute;left:0.00px;top:394.50px;width:8.00px;height:28.05px;background:#f7f8fa"></div>
<div style="position:absolute;left:0.00px;top:420.55px;width:8.00px;height:1.20px;background:#dcdcdc"></div>
<div style="position:absolute;left:8.00px;top:394.50px;width:1821.00px;height:28.05px;background:#ffffff"></div>
<div style="position:absolute;left:8.00px;top:419.85px;width:1821.00px;height:2.70px;background:#363c40"></div>
<div style="position:absolute;left:14.0px;top:400.18px;width:272.0px;overflow:hidden;font-size:16.8px;line-height:16.8px;color:#1e1e1e;white-space:nowrap">Boneless sirloin</div>
<div style="position:absolute;left:294.0px;top:400.18px;width:131.5px;overflow:hidden;font-size:16.8px;line-height:16.8px;color:#1e1e1e;white-space:nowrap">LN10</div>
<div style="position:absolute;left:433.5px;top:400.18px;width:132.5px;overflow:hidden;font-size:16.8px;line-height:16.8px;color:#1e1e1e;white-space:nowrap">10</div>
<div style="position:absolute;left:574.0px;top:400.18px;width:272.5px;overflow:hidden;font-size:16.8px;line-height:16.8px;color:#1e1e1e;white-space:nowrap">Sirloin - Boneless Denuded</div>
<div style="position:absolute;left:854.5px;top:400.18px;width:272.0px;overflow:hidden;font-size:16.8px;line-height:16.8px;color:#1e1e1e;white-space:nowrap">33364 WIP Sirloin Denuded</div>
<div style="position:absolute;left:1128.5px;top:400.18px;width:136.5px;text-align:right;font-size:16.8px;line-height:16.8px;color:#1e1e1e;white-space:nowrap">0.00</div>
<div style="position:absolute;left:1268.5px;top:400.18px;width:136.5px;text-align:right;font-size:16.8px;line-height:16.8px;color:#1e1e1e;white-space:nowrap">850.00</div>
<div style="position:absolute;left:1414.5px;top:400.18px;width:132.5px;overflow:hidden;font-size:16.8px;line-height:16.8px;color:#1e1e1e;white-space:nowrap">No</div>
<div style="position:absolute;left:1555.0px;top:400.18px;width:132.5px;overflow:hidden;font-size:16.8px;line-height:16.8px;color:#1e1e1e;white-space:nowrap"></div>
<div style="position:absolute;left:1695.5px;top:400.18px;width:131.5px;overflow:hidden;font-size:16.8px;line-height:16.8px;color:#1e1e1e;white-space:nowrap">Yes</div>
<div style="position:absolute;left:0.00px;top:422.55px;width:8.00px;height:28.05px;background:#f7f8fa"></div>
<div style="position:absolute;left:0.00px;top:448.60px;width:8.00px;height:1.20px;background:#dcdcdc"></div>
<div style="position:absolute;left:8.00px;top:422.55px;width:1821.00px;height:28.05px;background:#b7d8e3"></div>
<div style="position:absolute;left:8.00px;top:447.90px;width:1821.00px;height:2.70px;background:#363c40"></div>
<div style="position:absolute;left:14.0px;top:428.23px;width:272.0px;overflow:hidden;font-size:16.8px;line-height:16.8px;color:#1e1e1e;white-space:nowrap">Boneless Sirloin NF</div>
<div style="position:absolute;left:294.0px;top:428.23px;width:131.5px;overflow:hidden;font-size:16.8px;line-height:16.8px;color:#1e1e1e;white-space:nowrap">LN10</div>
<div style="position:absolute;left:433.5px;top:428.23px;width:132.5px;overflow:hidden;font-size:16.8px;line-height:16.8px;color:#1e1e1e;white-space:nowrap">10</div>
<div style="position:absolute;left:574.0px;top:428.23px;width:272.5px;overflow:hidden;font-size:16.8px;line-height:16.8px;color:#1e1e1e;white-space:nowrap">Sirloin - Boneless, Natural Fall Fat (NF)</div>
<div style="position:absolute;left:854.5px;top:428.23px;width:272.0px;overflow:hidden;font-size:16.8px;line-height:16.8px;color:#1e1e1e;white-space:nowrap">35616 WIP Bnls Sirloin NF</div>
<div style="position:absolute;left:1128.5px;top:428.23px;width:136.5px;text-align:right;font-size:16.8px;line-height:16.8px;color:#1e1e1e;white-space:nowrap">0.00</div>
<div style="position:absolute;left:1268.5px;top:428.23px;width:136.5px;text-align:right;font-size:16.8px;line-height:16.8px;color:#1e1e1e;white-space:nowrap">939.27</div>
<div style="position:absolute;left:1414.5px;top:428.23px;width:132.5px;overflow:hidden;font-size:16.8px;line-height:16.8px;color:#1e1e1e;white-space:nowrap">No</div>
<div style="position:absolute;left:1555.0px;top:428.23px;width:132.5px;overflow:hidden;font-size:16.8px;line-height:16.8px;color:#1e1e1e;white-space:nowrap"></div>
<div style="position:absolute;left:1695.5px;top:428.23px;width:131.5px;overflow:hidden;font-size:16.8px;line-height:16.8px;color:#1e1e1e;white-space:nowrap">Yes</div>
<div style="position:absolute;left:0.00px;top:450.60px;width:8.00px;height:28.05px;background:#f7f8fa"></div>
<div style="position:absolute;left:0.00px;top:476.65px;width:8.00px;height:1.20px;background:#dcdcdc"></div>
<div style="position:absolute;left:8.00px;top:450.60px;width:1821.00px;height:28.05px;background:#ffffff"></div>
<div style="position:absolute;left:8.00px;top:475.95px;width:1821.00px;height:2.70px;background:#363c40"></div>
<div style="position:absolute;left:14.0px;top:456.28px;width:272.0px;overflow:hidden;font-size:16.8px;line-height:16.8px;color:#1e1e1e;white-space:nowrap">Breast Bone Piece</div>
<div style="position:absolute;left:294.0px;top:456.28px;width:131.5px;overflow:hidden;font-size:16.8px;line-height:16.8px;color:#1e1e1e;white-space:nowrap">SH8</div>
<div style="position:absolute;left:433.5px;top:456.28px;width:132.5px;overflow:hidden;font-size:16.8px;line-height:16.8px;color:#1e1e1e;white-space:nowrap">4</div>
<div style="position:absolute;left:574.0px;top:456.28px;width:272.5px;overflow:hidden;font-size:16.8px;line-height:16.8px;color:#1e1e1e;white-space:nowrap">Shoulder Rib - 1st Rib & Breast Bone</div>
<div style="position:absolute;left:854.5px;top:456.28px;width:272.0px;overflow:hidden;font-size:16.8px;line-height:16.8px;color:#1e1e1e;white-space:nowrap">35604 WIP - Breast Bone Piece</div>
<div style="position:absolute;left:1128.5px;top:456.28px;width:136.5px;text-align:right;font-size:16.8px;line-height:16.8px;color:#1e1e1e;white-space:nowrap">0.00</div>
<div style="position:absolute;left:1268.5px;top:456.28px;width:136.5px;text-align:right;font-size:16.8px;line-height:16.8px;color:#1e1e1e;white-space:nowrap">600.56</div>
<div style="position:absolute;left:1414.5px;top:456.28px;width:132.5px;overflow:hidden;font-size:16.8px;line-height:16.8px;color:#1e1e1e;white-space:nowrap">No</div>
<div style="position:absolute;left:1555.0px;top:456.28px;width:132.5px;overflow:hidden;font-size:16.8px;line-height:16.8px;color:#1e1e1e;white-space:nowrap"></div>
<div style="position:absolute;left:1695.5px;top:456.28px;width:131.5px;overflow:hidden;font-size:16.8px;line-height:16.8px;color:#1e1e1e;white-space:nowrap">Yes</div>
<div style="position:absolute;left:287.00px;top:0.00px;width:2.00px;height:474.00px;background:#2e3336"></div>
<div style="position:absolute;left:426.50px;top:0.00px;width:2.00px;height:474.00px;background:#2e3336"></div>
<div style="position:absolute;left:567.00px;top:0.00px;width:2.00px;height:474.00px;background:#2e3336"></div>
<div style="position:absolute;left:847.50px;top:0.00px;width:2.00px;height:474.00px;background:#2e3336"></div>
<div style="position:absolute;left:1127.50px;top:0.00px;width:2.00px;height:474.00px;background:#2e3336"></div>
<div style="position:absolute;left:1267.50px;top:0.00px;width:2.00px;height:474.00px;background:#2e3336"></div>
<div style="position:absolute;left:1407.50px;top:0.00px;width:2.00px;height:474.00px;background:#2e3336"></div>
<div style="position:absolute;left:1548.00px;top:0.00px;width:2.00px;height:474.00px;background:#2e3336"></div>
<div style="position:absolute;left:1688.50px;top:0.00px;width:2.00px;height:474.00px;background:#2e3336"></div>
<div style="position:absolute;left:1828.00px;top:0.00px;width:2.00px;height:474.00px;background:#2e3336"></div>
</div>
<div style="position:absolute;top:687.01px;font-size:17px;line-height:17px;font-weight:400;font-style:italic;color:#222;white-space:nowrap;right:2.40px;">Total Products Listed: 57</div>
<div style="position:absolute;left:313.50px;top:741.80px;width:1859.00px;height:480.00px;border:2px solid #c9c9c9;background:#fff"></div>
<div style="position:absolute;left:385.00px;top:712.50px;width:127.00px;height:31.50px;background:linear-gradient(#f0f0f0,#e5e5e5);border:2px solid #c6c6c6"></div>
<div style="position:absolute;left:313.50px;top:709.50px;width:73.00px;height:34.50px;background:#fff;border:2px solid #c6c6c6;border-bottom:none"></div>
<div style="position:absolute;top:721.09px;font-size:15.6px;line-height:15.6px;font-weight:400;font-style:normal;color:#444;white-space:nowrap;left:326.30px;">Details</div>
<div style="position:absolute;top:720.97px;font-size:17.4px;line-height:17.4px;font-weight:400;font-style:normal;color:#2a2a2a;white-space:nowrap;left:392.00px;">Combo Codes</div>
<div style="position:absolute;top:760.96px;font-size:16px;line-height:16px;font-weight:700;font-style:normal;color:#1a1a1a;white-space:nowrap;left:326.00px;">Description</div>
<div style="position:absolute;top:805.36px;font-size:16px;line-height:16px;font-weight:700;font-style:normal;color:#1a1a1a;white-space:nowrap;left:326.00px;">Station ID</div>
<div style="position:absolute;top:849.76px;font-size:16px;line-height:16px;font-weight:700;font-style:normal;color:#1a1a1a;white-space:nowrap;left:326.00px;">Area</div>
<div style="position:absolute;top:894.16px;font-size:16px;line-height:16px;font-weight:700;font-style:normal;color:#1a1a1a;white-space:nowrap;left:326.00px;">Cut Spec</div>
<div style="position:absolute;top:938.56px;font-size:16px;line-height:16px;font-weight:700;font-style:normal;color:#1a1a1a;white-space:nowrap;left:326.00px;">WIP Product</div>
<div style="position:absolute;top:982.96px;font-size:16px;line-height:16px;font-weight:700;font-style:normal;color:#1a1a1a;white-space:nowrap;left:326.00px;">Target Weight</div>
<div style="position:absolute;top:1027.36px;font-size:16px;line-height:16px;font-weight:700;font-style:normal;color:#1a1a1a;white-space:nowrap;left:326.00px;">Avg Weight</div>
<div style="position:absolute;top:1071.76px;font-size:16px;line-height:16px;font-weight:700;font-style:normal;color:#1a1a1a;white-space:nowrap;left:326.00px;">Direct to Combo?</div>
<div style="position:absolute;top:1116.16px;font-size:16px;line-height:16px;font-weight:700;font-style:normal;color:#1a1a1a;white-space:nowrap;left:326.00px;">Destination</div>
<div style="position:absolute;top:1160.56px;font-size:16px;line-height:16px;font-weight:700;font-style:normal;color:#1a1a1a;white-space:nowrap;left:326.00px;">Active?</div>
<div style="position:absolute;left:467.10px;top:751.50px;width:444.00px;height:33.40px;background:#fff;border:1.5px solid #d3d3d3"></div>
<div style="position:absolute;top:758.33px;font-size:15.2px;line-height:15.2px;font-weight:400;font-style:normal;color:#8c8c8c;white-space:nowrap;left:471.00px;">Back Fat</div>
<div style="position:absolute;left:467.10px;top:795.90px;width:444.00px;height:33.40px;background:#fff;border:1.5px solid #d3d3d3"></div>
<div style="position:absolute;top:802.73px;font-size:15.2px;line-height:15.2px;font-weight:400;font-style:normal;color:#8c8c8c;white-space:nowrap;left:471.00px;">MB4</div>
<div style="position:absolute;left:467.10px;top:840.30px;width:444.00px;height:33.40px;background:#fff;border:1.5px solid #d3d3d3"></div>
<div style="position:absolute;top:847.13px;font-size:15.2px;line-height:15.2px;font-weight:400;font-style:normal;color:#8c8c8c;white-space:nowrap;left:471.00px;">1</div>
<div style="position:absolute;left:467.10px;top:884.70px;width:444.00px;height:33.40px;background:#efefef;border:1.5px solid #dcdcdc"></div>
<div style="position:absolute;top:894.89px;font-size:16.2px;line-height:16.2px;font-weight:400;font-style:normal;color:#1e1e1e;white-space:nowrap;left:475.60px;">Fat - Loin</div>
<svg style="left:892px;top:898.7px" width="12" height="8"><path d="M2 1.5 L6 5.5 L10 1.5" fill="none" stroke="#c4c4c4" stroke-width="1.4"/></svg>
<div style="position:absolute;left:467.10px;top:929.10px;width:444.00px;height:33.40px;background:#efefef;border:1.5px solid #dcdcdc"></div>
<div style="position:absolute;top:939.29px;font-size:16.2px;line-height:16.2px;font-weight:400;font-style:normal;color:#1e1e1e;white-space:nowrap;left:475.60px;">33365 WIP Loin Fat</div>
<svg style="left:892px;top:943.1px" width="12" height="8"><path d="M2 1.5 L6 5.5 L10 1.5" fill="none" stroke="#c4c4c4" stroke-width="1.4"/></svg>
<div style="position:absolute;left:467.10px;top:973.50px;width:444.00px;height:33.40px;background:#fff;border:1.5px solid #d3d3d3"></div>
<div style="position:absolute;top:980.33px;font-size:15.2px;line-height:15.2px;font-weight:400;font-style:normal;color:#8c8c8c;white-space:nowrap;left:471.00px;">0</div>
<div style="position:absolute;left:467.10px;top:1017.90px;width:444.00px;height:33.40px;background:#fff;border:1.5px solid #a8a8ae"></div>
<div style="position:absolute;top:1024.73px;font-size:15.2px;line-height:15.2px;font-weight:400;font-style:normal;color:#1e1e1e;white-space:nowrap;left:471.00px;">526.09091</div>
<div style="position:absolute;left:467.90px;top:1068.70px;width:21.00px;height:19.00px;background:#e9e9e9;border:1.5px solid #c4c4c4"></div>
<div style="position:absolute;left:467.10px;top:1106.70px;width:444.00px;height:33.40px;background:#efefef;border:1.5px solid #dcdcdc"></div>
<div style="position:absolute;top:1116.89px;font-size:16.2px;line-height:16.2px;font-weight:400;font-style:normal;color:#1e1e1e;white-space:nowrap;left:475.60px;"></div>
<svg style="left:892px;top:1120.7px" width="12" height="8"><path d="M2 1.5 L6 5.5 L10 1.5" fill="none" stroke="#c4c4c4" stroke-width="1.4"/></svg>
<div style="position:absolute;left:467.90px;top:1157.90px;width:21.00px;height:19.00px;background:#e9e9e9;border:1.5px solid #c4c4c4"></div>
<svg style="left:470px;top:1160px" width="17" height="15"><path d="M3 7.5 L7 11.5 L14 3" fill="none" stroke="#6e6e6e" stroke-width="2.2"/></svg>
<div style="position:absolute;top:760.36px;font-size:16px;line-height:16px;font-weight:700;font-style:normal;color:#111;white-space:nowrap;left:1338.30px;">Planned Mixed Products</div>
<div style="position:absolute;left:1074.50px;top:800.30px;width:9.00px;height:33.70px;background:#eceef0"></div>
<div style="position:absolute;left:1083.50px;top:800.30px;width:691.70px;height:33.70px;background:linear-gradient(#ffffff 0%,#f8f9fa 45%,#eef0f3 100%)"></div>
<div style="position:absolute;top:811.38px;font-size:15.5px;line-height:15.5px;font-weight:400;font-style:normal;color:#333;white-space:nowrap;left:1091.50px;">Day</div>
<div style="position:absolute;left:1312.80px;top:803.30px;width:1.50px;height:30.70px;background:#e1e4e8"></div>
<div style="position:absolute;top:811.38px;font-size:15.5px;line-height:15.5px;font-weight:400;font-style:normal;color:#333;white-space:nowrap;left:1321.80px;">Shift</div>
<div style="position:absolute;left:1543.30px;top:803.30px;width:1.50px;height:30.70px;background:#e1e4e8"></div>
<div style="position:absolute;top:811.38px;font-size:15.5px;line-height:15.5px;font-weight:400;font-style:normal;color:#333;white-space:nowrap;left:1552.30px;">Target Cut Spec</div>
<div style="position:absolute;left:1775.20px;top:800.30px;width:26.00px;height:347.20px;background:#f0f0f0"></div>
<div style="position:absolute;left:1775.20px;top:860.00px;width:26.00px;height:221.00px;background:#cdcdcd"></div>
<svg style="left:1782px;top:840px" width="14" height="9"><path d="M2 7 L7 2 L12 7" fill="none" stroke="#b0b0b0" stroke-width="1.4"/></svg>
<svg style="left:1782px;top:1130px" width="14" height="9"><path d="M2 2 L7 7 L12 2" fill="none" stroke="#b0b0b0" stroke-width="1.4"/></svg>
<div style="position:absolute;left:1074.50px;top:857.60px;width:9.00px;height:1.20px;background:#dddddd"></div>
<div style="position:absolute;left:1083.50px;top:833.95px;width:691.70px;height:26.15px;background:#fff"></div>
<div style="position:absolute;left:1083.50px;top:857.50px;width:691.70px;height:2.60px;background:#363c40"></div>
<div style="position:absolute;top:839.58px;font-size:15.8px;line-height:15.8px;font-weight:400;font-style:normal;color:#1e1e1e;white-space:nowrap;left:1088.50px;">Sunday</div>
<div style="position:absolute;top:839.58px;font-size:15.8px;line-height:15.8px;font-weight:400;font-style:normal;color:#1e1e1e;white-space:nowrap;left:1319.30px;">3</div>
<div style="position:absolute;top:839.58px;font-size:15.8px;line-height:15.8px;font-weight:400;font-style:normal;color:#1e1e1e;white-space:nowrap;left:1550.30px;">Fat - Shoulder</div>
<div style="position:absolute;left:1074.50px;top:883.75px;width:9.00px;height:1.20px;background:#dddddd"></div>
<div style="position:absolute;left:1083.50px;top:860.10px;width:691.70px;height:26.15px;background:#b7d8e3"></div>
<div style="position:absolute;left:1083.50px;top:883.65px;width:691.70px;height:2.60px;background:#363c40"></div>
<div style="position:absolute;top:865.73px;font-size:15.8px;line-height:15.8px;font-weight:400;font-style:normal;color:#1e1e1e;white-space:nowrap;left:1088.50px;">Monday</div>
<div style="position:absolute;top:865.73px;font-size:15.8px;line-height:15.8px;font-weight:400;font-style:normal;color:#1e1e1e;white-space:nowrap;left:1319.30px;">1</div>
<div style="position:absolute;top:865.73px;font-size:15.8px;line-height:15.8px;font-weight:400;font-style:normal;color:#1e1e1e;white-space:nowrap;left:1550.30px;">Fat - Shoulder</div>
<div style="position:absolute;left:1074.50px;top:909.90px;width:9.00px;height:1.20px;background:#dddddd"></div>
<div style="position:absolute;left:1083.50px;top:886.25px;width:691.70px;height:26.15px;background:#fff"></div>
<div style="position:absolute;left:1083.50px;top:909.80px;width:691.70px;height:2.60px;background:#363c40"></div>
<div style="position:absolute;top:891.88px;font-size:15.8px;line-height:15.8px;font-weight:400;font-style:normal;color:#1e1e1e;white-space:nowrap;left:1088.50px;">Monday</div>
<div style="position:absolute;top:891.88px;font-size:15.8px;line-height:15.8px;font-weight:400;font-style:normal;color:#1e1e1e;white-space:nowrap;left:1319.30px;">2</div>
<div style="position:absolute;top:891.88px;font-size:15.8px;line-height:15.8px;font-weight:400;font-style:normal;color:#1e1e1e;white-space:nowrap;left:1550.30px;">Fat - Shoulder</div>
<div style="position:absolute;left:1074.50px;top:936.05px;width:9.00px;height:1.20px;background:#dddddd"></div>
<div style="position:absolute;left:1083.50px;top:912.40px;width:691.70px;height:26.15px;background:#b7d8e3"></div>
<div style="position:absolute;left:1083.50px;top:935.95px;width:691.70px;height:2.60px;background:#363c40"></div>
<div style="position:absolute;top:918.03px;font-size:15.8px;line-height:15.8px;font-weight:400;font-style:normal;color:#1e1e1e;white-space:nowrap;left:1088.50px;">Tuesday</div>
<div style="position:absolute;top:918.03px;font-size:15.8px;line-height:15.8px;font-weight:400;font-style:normal;color:#1e1e1e;white-space:nowrap;left:1319.30px;">1</div>
<div style="position:absolute;top:918.03px;font-size:15.8px;line-height:15.8px;font-weight:400;font-style:normal;color:#1e1e1e;white-space:nowrap;left:1550.30px;">Fat - Shoulder</div>
<div style="position:absolute;left:1074.50px;top:962.20px;width:9.00px;height:1.20px;background:#dddddd"></div>
<div style="position:absolute;left:1083.50px;top:938.55px;width:691.70px;height:26.15px;background:#fff"></div>
<div style="position:absolute;left:1083.50px;top:962.10px;width:691.70px;height:2.60px;background:#363c40"></div>
<div style="position:absolute;top:944.18px;font-size:15.8px;line-height:15.8px;font-weight:400;font-style:normal;color:#1e1e1e;white-space:nowrap;left:1088.50px;">Tuesday</div>
<div style="position:absolute;top:944.18px;font-size:15.8px;line-height:15.8px;font-weight:400;font-style:normal;color:#1e1e1e;white-space:nowrap;left:1319.30px;">2</div>
<div style="position:absolute;top:944.18px;font-size:15.8px;line-height:15.8px;font-weight:400;font-style:normal;color:#1e1e1e;white-space:nowrap;left:1550.30px;">Fat - Shoulder</div>
<div style="position:absolute;left:1074.50px;top:988.35px;width:9.00px;height:1.20px;background:#dddddd"></div>
<div style="position:absolute;left:1083.50px;top:964.70px;width:691.70px;height:26.15px;background:#b7d8e3"></div>
<div style="position:absolute;left:1083.50px;top:988.25px;width:691.70px;height:2.60px;background:#363c40"></div>
<div style="position:absolute;top:970.33px;font-size:15.8px;line-height:15.8px;font-weight:400;font-style:normal;color:#1e1e1e;white-space:nowrap;left:1088.50px;">Wednesday</div>
<div style="position:absolute;top:970.33px;font-size:15.8px;line-height:15.8px;font-weight:400;font-style:normal;color:#1e1e1e;white-space:nowrap;left:1319.30px;">1</div>
<div style="position:absolute;top:970.33px;font-size:15.8px;line-height:15.8px;font-weight:400;font-style:normal;color:#1e1e1e;white-space:nowrap;left:1550.30px;">Fat - Shoulder</div>
<div style="position:absolute;left:1074.50px;top:1014.50px;width:9.00px;height:1.20px;background:#dddddd"></div>
<div style="position:absolute;left:1083.50px;top:990.85px;width:691.70px;height:26.15px;background:#fff"></div>
<div style="position:absolute;left:1083.50px;top:1014.40px;width:691.70px;height:2.60px;background:#363c40"></div>
<div style="position:absolute;top:996.48px;font-size:15.8px;line-height:15.8px;font-weight:400;font-style:normal;color:#1e1e1e;white-space:nowrap;left:1088.50px;">Wednesday</div>
<div style="position:absolute;top:996.48px;font-size:15.8px;line-height:15.8px;font-weight:400;font-style:normal;color:#1e1e1e;white-space:nowrap;left:1319.30px;">2</div>
<div style="position:absolute;top:996.48px;font-size:15.8px;line-height:15.8px;font-weight:400;font-style:normal;color:#1e1e1e;white-space:nowrap;left:1550.30px;">Fat - Shoulder</div>
<div style="position:absolute;left:1074.50px;top:1040.65px;width:9.00px;height:1.20px;background:#dddddd"></div>
<div style="position:absolute;left:1083.50px;top:1017.00px;width:691.70px;height:26.15px;background:#b7d8e3"></div>
<div style="position:absolute;left:1083.50px;top:1040.55px;width:691.70px;height:2.60px;background:#363c40"></div>
<div style="position:absolute;top:1022.63px;font-size:15.8px;line-height:15.8px;font-weight:400;font-style:normal;color:#1e1e1e;white-space:nowrap;left:1088.50px;">Thursday</div>
<div style="position:absolute;top:1022.63px;font-size:15.8px;line-height:15.8px;font-weight:400;font-style:normal;color:#1e1e1e;white-space:nowrap;left:1319.30px;">1</div>
<div style="position:absolute;top:1022.63px;font-size:15.8px;line-height:15.8px;font-weight:400;font-style:normal;color:#1e1e1e;white-space:nowrap;left:1550.30px;">Fat - Shoulder</div>
<div style="position:absolute;left:1074.50px;top:1066.80px;width:9.00px;height:1.20px;background:#dddddd"></div>
<div style="position:absolute;left:1083.50px;top:1043.15px;width:691.70px;height:26.15px;background:#fff"></div>
<div style="position:absolute;left:1083.50px;top:1066.70px;width:691.70px;height:2.60px;background:#363c40"></div>
<div style="position:absolute;top:1048.78px;font-size:15.8px;line-height:15.8px;font-weight:400;font-style:normal;color:#1e1e1e;white-space:nowrap;left:1088.50px;">Thursday</div>
<div style="position:absolute;top:1048.78px;font-size:15.8px;line-height:15.8px;font-weight:400;font-style:normal;color:#1e1e1e;white-space:nowrap;left:1319.30px;">2</div>
<div style="position:absolute;top:1048.78px;font-size:15.8px;line-height:15.8px;font-weight:400;font-style:normal;color:#1e1e1e;white-space:nowrap;left:1550.30px;">Fat - Shoulder</div>
<div style="position:absolute;left:1074.50px;top:1092.95px;width:9.00px;height:1.20px;background:#dddddd"></div>
<div style="position:absolute;left:1083.50px;top:1069.30px;width:691.70px;height:26.15px;background:#b7d8e3"></div>
<div style="position:absolute;left:1083.50px;top:1092.85px;width:691.70px;height:2.60px;background:#363c40"></div>
<div style="position:absolute;top:1074.93px;font-size:15.8px;line-height:15.8px;font-weight:400;font-style:normal;color:#1e1e1e;white-space:nowrap;left:1088.50px;">Friday</div>
<div style="position:absolute;top:1074.93px;font-size:15.8px;line-height:15.8px;font-weight:400;font-style:normal;color:#1e1e1e;white-space:nowrap;left:1319.30px;">1</div>
<div style="position:absolute;top:1074.93px;font-size:15.8px;line-height:15.8px;font-weight:400;font-style:normal;color:#1e1e1e;white-space:nowrap;left:1550.30px;">Fat - Shoulder</div>
<div style="position:absolute;left:1074.50px;top:1119.10px;width:9.00px;height:1.20px;background:#dddddd"></div>
<div style="position:absolute;left:1083.50px;top:1095.45px;width:691.70px;height:26.15px;background:#fff"></div>
<div style="position:absolute;left:1083.50px;top:1119.00px;width:691.70px;height:2.60px;background:#363c40"></div>
<div style="position:absolute;top:1101.08px;font-size:15.8px;line-height:15.8px;font-weight:400;font-style:normal;color:#1e1e1e;white-space:nowrap;left:1088.50px;">Friday</div>
<div style="position:absolute;top:1101.08px;font-size:15.8px;line-height:15.8px;font-weight:400;font-style:normal;color:#1e1e1e;white-space:nowrap;left:1319.30px;">2</div>
<div style="position:absolute;top:1101.08px;font-size:15.8px;line-height:15.8px;font-weight:400;font-style:normal;color:#1e1e1e;white-space:nowrap;left:1550.30px;">Fat - Shoulder</div>
<div style="position:absolute;left:1074.50px;top:1145.25px;width:9.00px;height:1.20px;background:#dddddd"></div>
<div style="position:absolute;left:1083.50px;top:1121.60px;width:691.70px;height:26.15px;background:#b7d8e3"></div>
<div style="position:absolute;left:1083.50px;top:1145.15px;width:691.70px;height:2.60px;background:#363c40"></div>
<div style="position:absolute;top:1127.23px;font-size:15.8px;line-height:15.8px;font-weight:400;font-style:normal;color:#1e1e1e;white-space:nowrap;left:1088.50px;">Saturday</div>
<div style="position:absolute;top:1127.23px;font-size:15.8px;line-height:15.8px;font-weight:400;font-style:normal;color:#1e1e1e;white-space:nowrap;left:1319.30px;">1</div>
<div style="position:absolute;top:1127.23px;font-size:15.8px;line-height:15.8px;font-weight:400;font-style:normal;color:#1e1e1e;white-space:nowrap;left:1550.30px;">Fat - Shoulder</div>
<div style="position:absolute;left:1312.80px;top:834.00px;width:2.00px;height:313.50px;background:#2e3336"></div>
<div style="position:absolute;left:1543.30px;top:834.00px;width:2.00px;height:313.50px;background:#2e3336"></div>
<div style="position:absolute;left:1774.20px;top:834.00px;width:2.00px;height:313.50px;background:#2e3336"></div>
<div style="position:absolute;left:1323.5px;top:1164.5px;font-size:16px;line-height:16px;color:#3b3be6;text-decoration:underline;white-space:nowrap">View Planned Mixed Products</div>
<div style="position:absolute;left:647.30px;top:68.00px;width:360.70px;height:287.70px;background:#eeeff1;border-radius:0 0 6px 6px;box-shadow:1.5px 1.5px 2.5px rgba(0,0,0,0.32)"></div>
<div style="position:absolute;top:87.49px;font-size:17.5px;line-height:17.5px;font-weight:400;font-style:normal;color:#353535;white-space:nowrap;left:706.00px;">Plant Calendar</div>
<div style="position:absolute;top:141.19px;font-size:17.5px;line-height:17.5px;font-weight:400;font-style:normal;color:#353535;white-space:nowrap;left:706.00px;">Hog Schedule</div>
<div style="position:absolute;left:695.00px;top:180.00px;width:313.00px;height:1.50px;background:#d9d9db"></div>
<div style="position:absolute;top:201.69px;font-size:17.5px;line-height:17.5px;font-weight:400;font-style:normal;color:#353535;white-space:nowrap;left:706.00px;">Planning Rules Config</div>
<div style="position:absolute;left:650.50px;top:238.60px;width:357.50px;height:51.50px;background:#e3e4e6"></div>
<div style="position:absolute;top:255.09px;font-size:17.5px;line-height:17.5px;font-weight:400;font-style:normal;color:#353535;white-space:nowrap;left:706.00px;">Plant Config</div>
<div style="position:absolute;left:695.00px;top:294.00px;width:313.00px;height:1.50px;background:#d9d9db"></div>
<div style="position:absolute;top:315.39px;font-size:17.5px;line-height:17.5px;font-weight:400;font-style:normal;color:#353535;white-space:nowrap;left:706.00px;">Master Production Schedule</div>
<svg style="left:940px;top:207.0px" width="8" height="10"><polygon points="0.5,0 6.5,5 0.5,10" fill="#1a1a1a"/></svg>
<svg style="left:940px;top:260.7px" width="8" height="10"><polygon points="0.5,0 6.5,5 0.5,10" fill="#1a1a1a"/></svg>
<div style="position:absolute;left:948.90px;top:251.90px;width:336.60px;height:215.80px;background:#eeeff1;border-radius:4px 4px 6px 6px;box-shadow:1.5px 1.5px 2.5px rgba(0,0,0,0.32)"></div>
<div style="position:absolute;left:950.70px;top:358.30px;width:334.00px;height:51.00px;background:#e4e5e7;border:3px solid #cf4a3e"></div>
<div style="position:absolute;top:267.89px;font-size:17.5px;line-height:17.5px;font-weight:400;font-style:normal;color:#353535;white-space:nowrap;left:1007.00px;">Shift Configuration</div>
<div style="position:absolute;top:321.29px;font-size:17.5px;line-height:17.5px;font-weight:400;font-style:normal;color:#353535;white-space:nowrap;left:1007.00px;">Offline Processing Areas</div>
<div style="position:absolute;top:374.39px;font-size:17.5px;line-height:17.5px;font-weight:400;font-style:normal;color:#353535;white-space:nowrap;left:1007.00px;">Product Collection Points</div>
<div style="position:absolute;top:428.29px;font-size:17.5px;line-height:17.5px;font-weight:400;font-style:normal;color:#353535;white-space:nowrap;left:1007.00px;">Product Routing</div>
</body></html>
